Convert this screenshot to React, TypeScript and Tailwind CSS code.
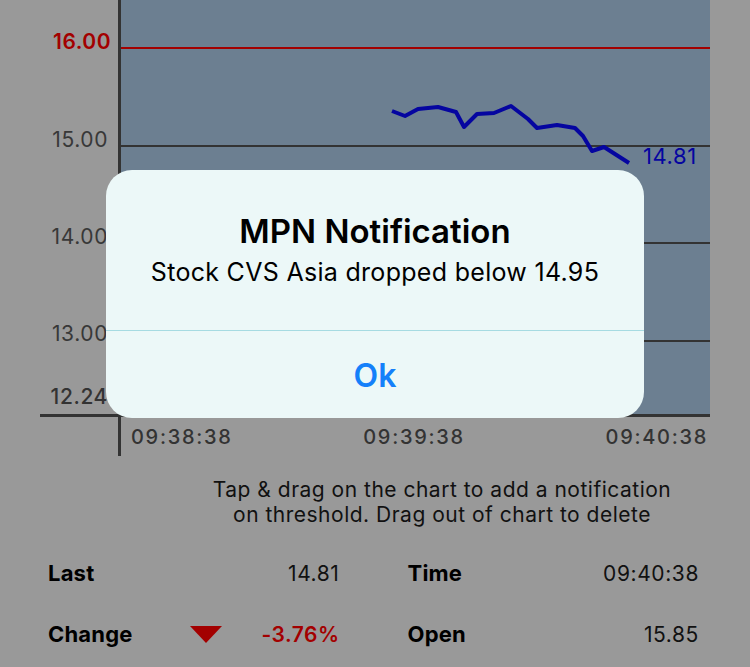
import React from "react";

const points: [number, number][] = [
  [392, 111],
  [405, 116],
  [418, 109],
  [438, 107],
  [456, 112],
  [464, 127],
  [477, 114],
  [494, 113],
  [511, 106],
  [528, 119],
  [537, 128],
  [557, 125],
  [575, 128],
  [583, 136],
  [592, 151],
  [604, 147],
  [629, 163],
];

const yLabels = [
  { text: "15.00", y: 147 },
  { text: "14.00", y: 244 },
  { text: "13.00", y: 341 },
];

const Chart = () => (
  <svg width={750} height={458} className="block">
    <rect x={121} y={0} width={589} height={415} fill="#6c7f91" />
    <line x1={121} x2={710} y1={48} y2={48} stroke="#a30000" strokeWidth={2} />
    {[146, 243, 341].map((y) => (
      <line key={y} x1={121} x2={710} y1={y} y2={y} stroke="#333" strokeWidth={2} />
    ))}
    <line x1={119.5} x2={119.5} y1={0} y2={456} stroke="#333" strokeWidth={3} />
    <line x1={40} x2={710} y1={415.5} y2={415.5} stroke="#333" strokeWidth={3} />
    <polyline
      points={points.map((p) => p.join(",")).join(" ")}
      fill="none"
      stroke="#0505a0"
      strokeWidth={4}
      strokeLinejoin="round"
    />
    <g fontFamily="Inter, 'Liberation Sans', sans-serif" fontSize={21}>
      <text x={111} y={49} textAnchor="end" fill="#a30000" fontWeight={600} letterSpacing={0.5}>
        16.00
      </text>
      {yLabels.map((l) => (
        <text key={l.text} x={108} y={l.y} textAnchor="end" fill="#383838" letterSpacing={0.6}>
          {l.text}
        </text>
      ))}
      <text x={108} y={404} textAnchor="end" fill="#333" fontWeight={500} letterSpacing={0.6}>
        12.24
      </text>
      <text x={643} y={164} fill="#0505a0" fontSize={22} letterSpacing={0.6}>
        14.81
      </text>
      <g fill="#333" fontWeight={500} fontSize={20} letterSpacing={1.7}>
        <text x={131} y={444}>09:38:38</text>
        <text x={414} y={444} textAnchor="middle">
          09:39:38
        </text>
        <text x={708} y={444} textAnchor="end">
          09:40:38
        </text>
      </g>
    </g>
  </svg>
);

const Stat = ({
  label,
  value,
  red,
  arrow,
}: {
  label: string;
  value: string;
  red?: boolean;
  arrow?: boolean;
}) => (
  <div className="flex items-center justify-between">
    <span className="font-bold text-[22px] text-black tracking-[0.2px]">{label}</span>
    <div className="flex items-center">
      {arrow && (
        <svg width={32} height={17} className="mr-[39px]">
          <polygon points="0,0 32,0 16,17" fill="#a30000" />
        </svg>
      )}
      <span
        className={
          red
            ? "font-semibold text-[21px] tracking-[0.5px] text-[#a30000]"
            : "text-[21px] tracking-[0.6px] text-[#111]"
        }
      >
        {value}
      </span>
    </div>
  </div>
);

export default function App() {
  return (
    <div
      className="relative w-[750px] h-[667px] overflow-hidden bg-[#999999]"
      style={{ fontFamily: "Inter, 'Liberation Sans', sans-serif" }}
    >
      <Chart />
      <div className="ml-[134px] w-[616px] mt-[19px] text-center text-[21px] tracking-[0.5px] leading-[25px] text-[#111]">
        Tap &amp; drag on the chart to add a notification
        <br />
        on threshold. Drag out of chart to delete
      </div>
      <div className="grid grid-cols-2 gap-x-[68px] gap-y-[28px] pl-[48px] pr-[51px] mt-[30px]">
        <Stat label="Last" value="14.81" />
        <Stat label="Time" value="09:40:38" />
        <Stat label="Change" value="-3.76%" red arrow />
        <Stat label="Open" value="15.85" />
      </div>

      <div className="absolute left-[106px] top-[170px] w-[538px] h-[248px] rounded-[26px] bg-[#ecf8f8] flex flex-col">
        <div className="h-[160px] flex flex-col items-center pt-[41px]">
          <div className="text-[33px] font-semibold text-black leading-[40px]">
            MPN Notification
          </div>
          <div className="text-[25px] tracking-[0.3px] text-black leading-[30px] mt-[6px]">
            Stock CVS Asia dropped below 14.95
          </div>
        </div>
        <div className="h-px bg-[#a6dbe2]" />
        <div className="flex-1 flex items-center justify-center pt-[3px]">
          <span className="text-[32px] font-semibold text-[#1480fa]">Ok</span>
        </div>
      </div>
    </div>
  );
}
